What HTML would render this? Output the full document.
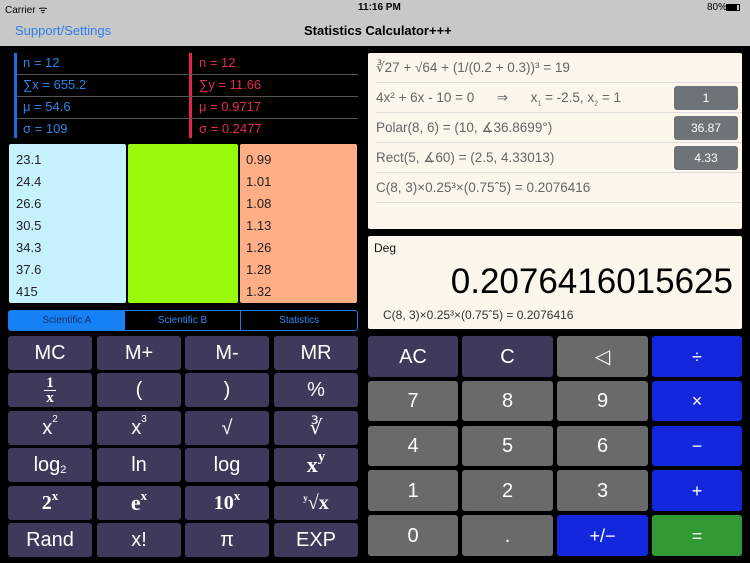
<!DOCTYPE html><html><head><meta charset="utf-8"><style>
*{margin:0;padding:0;box-sizing:border-box}
body{width:750px;height:563px;background:#000;font-family:"Liberation Sans","DejaVu Sans",sans-serif;position:relative;overflow:hidden}
.a{position:absolute}
.bar{left:0;top:0;width:750px;height:46px;background:#c8c8c8}
.ln{position:absolute;left:17px;width:341px;height:1px;background:#555}
.k{position:absolute;color:#fff;display:flex;align-items:center;justify-content:center;border-radius:3px;line-height:1}
.k .up{position:relative;top:-8px}
.k .dn{position:relative;top:5px}
.l{background:#3d3a5c;font-size:20px}
.g{background:#6a6a6a;font-size:20px}
.b{background:#1328dd;font-size:18px}
.eq{position:absolute;height:29px;border-bottom:1px solid #ddd;left:8px;right:0;line-height:28px;font-size:13.5px;color:#666}
.pill{position:absolute;left:298px;width:64px;height:24px;top:2px;background:#6d7378;color:#fff;border-radius:3px;text-align:center;line-height:24px;font-size:12px}
</style></head><body>
<div class="a bar"></div>
<div class="a" style="left:5px;top:2px;font-size:10px">Carrier ᯤ</div>
<div class="a" style="left:358px;top:2px;font-size:10px;font-weight:bold">11:16 PM</div>
<div class="a" style="left:707px;top:2px;font-size:10px">80%</div>
<div class="a" style="left:726px;top:4px;width:14px;height:7px;border:1px solid #000;"><div style="width:10px;height:5px;background:#000"></div></div>
<div class="a" style="left:15px;top:23px;font-size:13px;color:#2f7ee8">Support/Settings</div>
<div class="a" style="left:304px;top:23px;font-size:13px;font-weight:bold;color:#000">Statistics Calculator+++</div>

<div class="a" style="left:14px;top:53px;width:3px;height:85px;background:#1a6fe0"></div>
<div class="a" style="left:189px;top:53px;width:3px;height:85px;background:#e0284a"></div>
<div class="ln" style="top:74px"></div>
<div class="ln" style="top:96px"></div>
<div class="ln" style="top:118px"></div>
<div class="a" style="left:23px;top:52px;font-size:13px;color:#2d84e6;line-height:22px">n = 12<br>∑x = 655.2<br>μ = 54.6<br>σ = 109</div>
<div class="a" style="left:199px;top:52px;font-size:13px;color:#e22d4e;line-height:22px">n = 12<br>∑y = 11.66<br>μ = 0.9717<br>σ = 0.2477</div>

<div class="a" style="left:9px;top:144px;width:117px;height:159px;background:#c6f2fd;border-radius:2px"></div>
<div class="a" style="left:128px;top:144px;width:110px;height:159px;background:#99f90a;border-radius:2px"></div>
<div class="a" style="left:240px;top:144px;width:117px;height:159px;background:#ffae86;border-radius:2px"></div>
<div class="a" style="left:9px;top:149px;width:117px;font-size:13px;line-height:22px;padding-left:7px;color:#222">23.1<br>24.4<br>26.6<br>30.5<br>34.3<br>37.6<br>415</div>
<div class="a" style="left:240px;top:149px;width:117px;font-size:13px;line-height:22px;padding-left:6px;color:#222">0.99<br>1.01<br>1.08<br>1.13<br>1.26<br>1.28<br>1.32</div>

<div class="a" style="left:8px;top:310px;width:350px;height:21px;border:1px solid #1a7de8;border-radius:3px;display:flex;font-size:10px;color:#2f87f0">
<div style="flex:1;background:#1680f5;color:#12306a;text-align:center;line-height:19px">Scientific A</div>
<div style="flex:1;text-align:center;line-height:19px;border-right:1px solid #1a7de8">Scientific B</div>
<div style="flex:1;text-align:center;line-height:19px">Statistics</div></div>

<div class="a" style="left:368px;top:53px;width:374px;height:176px;background:#fdf6ec;border-radius:2px">
<div class="eq" style="top:1px">∛27 + √64 + (1/(0.2 + 0.3))³ = 19</div>
<div class="eq" style="top:31px">4x² + 6x - 10 = 0 &nbsp;&nbsp;&nbsp;&nbsp;&nbsp;⇒ &nbsp;&nbsp;&nbsp;&nbsp;&nbsp;x<sub style="font-size:7px">1</sub> = -2.5, x<sub style="font-size:7px">2</sub> = 1<div class="pill">1</div></div>
<div class="eq" style="top:61px">Polar(8, 6) = (10, ∡36.8699°)<div class="pill">36.87</div></div>
<div class="eq" style="top:91px">Rect(5, ∡60) = (2.5, 4.33013)<div class="pill">4.33</div></div>
<div class="eq" style="top:121px">C(8, 3)×0.25³×(0.75ˆ5) = 0.2076416</div>
</div>
<div class="a" style="left:368px;top:236px;width:374px;height:93px;background:#fdf6ec;border-radius:2px">
<div class="a" style="left:6px;top:5px;font-size:12px;color:#111">Deg</div>
<div class="a" style="right:9px;top:26px;font-size:35px;color:#000">0.2076416015625</div>
<div class="a" style="left:15px;top:72px;font-size:12px;color:#333">C(8, 3)×0.25³×(0.75ˆ5) = 0.2076416</div>
</div>

<div class="k l" style="left:8px;top:336px;width:84px;height:34px">MC</div>
<div class="k l" style="left:97px;top:336px;width:84px;height:34px">M+</div>
<div class="k l" style="left:185px;top:336px;width:84px;height:34px">M-</div>
<div class="k l" style="left:274px;top:336px;width:84px;height:34px">MR</div>
<div class="k l" style="left:8px;top:373px;width:84px;height:34px;font-family:'Liberation Serif',serif;font-weight:bold;font-size:15px;flex-direction:column;line-height:14px"><span style="border-bottom:1.5px solid #fff;padding:0 2px">1</span><span>x</span></div>
<div class="k l" style="left:97px;top:373px;width:84px;height:34px">(</div>
<div class="k l" style="left:185px;top:373px;width:84px;height:34px">)</div>
<div class="k l" style="left:274px;top:373px;width:84px;height:34px">%</div>
<div class="k l" style="left:8px;top:411px;width:84px;height:34px">x<span class="up" style="font-size:10px">2</span></div>
<div class="k l" style="left:97px;top:411px;width:84px;height:34px">x<span class="up" style="font-size:10px">3</span></div>
<div class="k l" style="left:185px;top:411px;width:84px;height:34px">√</div>
<div class="k l" style="left:274px;top:411px;width:84px;height:34px">∛</div>
<div class="k l" style="left:8px;top:448px;width:84px;height:34px">log<span class="dn" style="font-size:11px">2</span></div>
<div class="k l" style="left:97px;top:448px;width:84px;height:34px">ln</div>
<div class="k l" style="left:185px;top:448px;width:84px;height:34px">log</div>
<div class="k l" style="left:274px;top:448px;width:84px;height:34px;font-family:'Liberation Serif',serif;font-weight:bold;font-size:22px">x<span class="up" style="font-size:15px">y</span></div>
<div class="k l" style="left:8px;top:486px;width:84px;height:34px;font-family:'Liberation Serif',serif;font-weight:bold">2<span class="up" style="font-size:13px">x</span></div>
<div class="k l" style="left:97px;top:486px;width:84px;height:34px;font-family:'Liberation Serif',serif;font-weight:bold;font-size:22px">e<span class="up" style="font-size:13px">x</span></div>
<div class="k l" style="left:185px;top:486px;width:84px;height:34px;font-family:'Liberation Serif',serif;font-weight:bold">10<span class="up" style="font-size:13px">x</span></div>
<div class="k l" style="left:274px;top:486px;width:84px;height:34px;font-family:'Liberation Serif',serif;font-weight:bold"><span class="up" style="font-size:9px;top:-5px">y</span>√x</div>
<div class="k l" style="left:8px;top:523px;width:84px;height:34px">Rand</div>
<div class="k l" style="left:97px;top:523px;width:84px;height:34px">x!</div>
<div class="k l" style="left:185px;top:523px;width:84px;height:34px">π</div>
<div class="k l" style="left:274px;top:523px;width:84px;height:34px">EXP</div>

<div class="k l" style="left:368px;top:336px;width:90px;height:41px">AC</div>
<div class="k l" style="left:462px;top:336px;width:91px;height:41px">C</div>
<div class="k g" style="left:557px;top:336px;width:91px;height:41px">◁</div>
<div class="k b" style="left:652px;top:336px;width:90px;height:41px">÷</div>
<div class="k g" style="left:368px;top:381px;width:90px;height:40px">7</div>
<div class="k g" style="left:462px;top:381px;width:91px;height:40px">8</div>
<div class="k g" style="left:557px;top:381px;width:91px;height:40px">9</div>
<div class="k b" style="left:652px;top:381px;width:90px;height:40px">×</div>
<div class="k g" style="left:368px;top:426px;width:90px;height:40px">4</div>
<div class="k g" style="left:462px;top:426px;width:91px;height:40px">5</div>
<div class="k g" style="left:557px;top:426px;width:91px;height:40px">6</div>
<div class="k b" style="left:652px;top:426px;width:90px;height:40px">−</div>
<div class="k g" style="left:368px;top:470px;width:90px;height:41px">1</div>
<div class="k g" style="left:462px;top:470px;width:91px;height:41px">2</div>
<div class="k g" style="left:557px;top:470px;width:91px;height:41px">3</div>
<div class="k b" style="left:652px;top:470px;width:90px;height:41px">+</div>
<div class="k g" style="left:368px;top:515px;width:90px;height:41px">0</div>
<div class="k g" style="left:462px;top:515px;width:91px;height:41px">.</div>
<div class="k b" style="left:557px;top:515px;width:91px;height:41px">+/−</div>
<div class="k" style="left:652px;top:515px;width:90px;height:41px;background:#319a35;font-size:18px">=</div>
</body></html>
